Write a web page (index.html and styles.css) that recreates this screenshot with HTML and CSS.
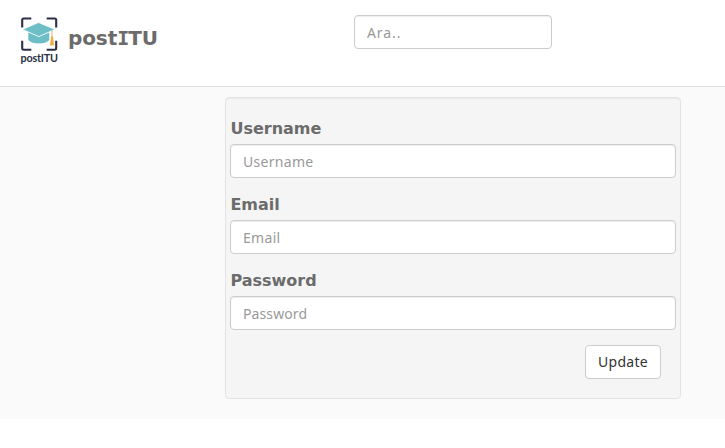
FILE: index.html
```html
<!DOCTYPE html>
<html lang="tr">
<head>
<meta charset="utf-8">
<title>postITU</title>
<link rel="stylesheet" href="styles.css">
</head>
<body>
<header class="header">
  <a class="brand">
    <svg class="logo" width="40" height="50" viewBox="0 0 40 50">
      <g fill="none" stroke="#2b3044" stroke-width="2.1" stroke-linejoin="round">
        <path d="M2.200 11.500V4.100Q2.200 2.500 3.600 2.500H11.300M26.700 2.500h8.100q1.400 0 1.400 1.600V11.500M2.200 24.700v7.400q0 1.600 1.400 1.600H11.300M26.700 33.700h8.100q1.400 0 1.400-1.600v-7.400"/>
      </g>
      <path fill="#6dbec6" d="M8.300 16.300l10.500 4.300L29.300 16.300v7.600q-3.200 3.500-10.500 3.500T8.300 23.900z"/>
      <path fill="#6dbec6" stroke="#fff" stroke-width=".8" d="M18.500 6.500L35 13.400 18.800 20.600 2.500 13.400z"/>
      <path stroke="#e2b260" stroke-width="1" d="M32 14.500V21"/>
      <path fill="#edae46" d="M31 20.500h2l1 9h-4z"/>
      <text class="logo-text" x="0.500" y="46">postITU</text>
    </svg>
    <span class="brand-name">post<span class="brand-i">I</span>TU</span>
  </a>
  <input class="field search" type="text" placeholder="Ara..">
</header>
<main class="content">
  <form class="panel">
    <label class="label" for="username">Username</label>
    <input class="field" id="username" type="text" placeholder="Username">
    <label class="label" for="email">Email</label>
    <input class="field" id="email" type="text" placeholder="Email">
    <label class="label" for="password">Password</label>
    <input class="field password" id="password" type="password" placeholder="Password">
    <button class="update" type="button">Update</button>
  </form>
</main>
</body>
</html>
```
FILE: styles.css
```css
* { box-sizing: border-box; }
body { margin: 0; background: #fff; color: #6b6b6b; font-family: "DejaVu Sans", sans-serif; }
.header { display: flex; align-items: flex-start; height: 87px; border-bottom: 1px solid #ddd; }
.brand { display: flex; width: 334px; margin-left: 20px; padding-top: 16px; }
.logo { display: block; flex: none; }
.logo-text { font: 700 10.8px Lato, sans-serif; letter-spacing: -.2px; fill: #2b3044; }
.brand-name { margin: 9px 0 0 8px; font-size: 20px; line-height: 26px; font-weight: 700; letter-spacing: -0.1px; }
.brand-i { font-family: "DejaVu Sans Mono", monospace; letter-spacing: -1px; }
.field { display: block; flex: none; width: 100%; height: 34px; margin: 0; padding: 6px 12px; border: 1px solid #ccc; border-radius: 4px; background: #fff; box-shadow: inset 0 1px 1px rgba(0, 0, 0, .075); color: #555; font: 14px/20px "Noto Sans", sans-serif; letter-spacing: .3px; }
.field::placeholder { color: #999; opacity: 1; }
.search { width: 198px; margin-top: 15px; letter-spacing: .9px; }
.password { letter-spacing: .1px; }
.content { height: 332px; padding: 10px 44px 0 225px; background: #fafafa; }
.panel { display: flex; flex-direction: column; width: 456px; height: 302px; padding: 20px 4px 19px; border: 1px solid #e3e3e3; border-radius: 4px; background: #f5f5f5; box-shadow: inset 0 1px 1px rgba(0, 0, 0, .05); }
.label { flex: none; height: 22px; margin: 0 0 4px .4px; font-size: 16px; line-height: 22px; font-weight: 700; }
.field + .label { margin-top: 16px; }
.update { align-self: flex-end; flex: none; width: 76px; height: 34px; margin: 15px 15px 0 0; padding: 0; border: 1px solid #ccc; border-radius: 4px; background: #fff; color: #333; font: 14px/20px "Noto Sans", sans-serif; letter-spacing: .3px; }
```
